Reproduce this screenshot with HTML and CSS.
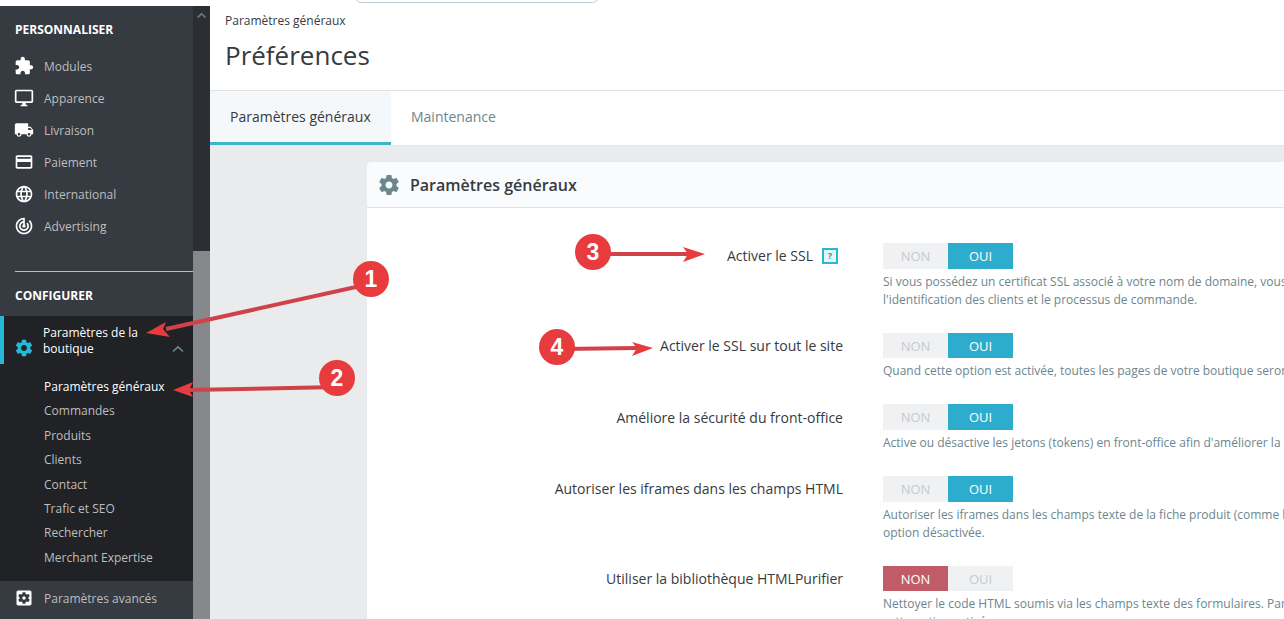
FILE: index.html
```html
<!DOCTYPE html>
<html lang="fr">
<head>
<meta charset="utf-8">
<title>Préférences</title>
<link rel="stylesheet" href="styles.css">
</head>
<body>
<div class="app">
  <aside class="sidebar">
    <nav class="nav">
      <h2 class="nav-title">PERSONNALISER</h2>
      <ul class="nav-list">
        <li class="nav-item"><svg class="nav-icon" viewBox="0 0 24 24"><path d="M20.5 11H19V7c0-1.1-.9-2-2-2h-4V3.5C13 2.12 11.88 1 10.5 1S8 2.12 8 3.5V5H4c-1.1 0-1.99.9-1.99 2v3.8H3.5c1.49 0 2.7 1.21 2.7 2.7s-1.21 2.7-2.7 2.7H2V20c0 1.1.9 2 2 2h3.8v-1.5c0-1.49 1.21-2.7 2.7-2.7 1.49 0 2.7 1.21 2.7 2.7V22H17c1.1 0 2-.9 2-2v-4h1.5c1.38 0 2.5-1.12 2.5-2.5S21.88 11 20.5 11z"/></svg><span>Modules</span></li>
        <li class="nav-item"><svg class="nav-icon" viewBox="0 0 24 24"><path d="M21 2H3c-1.1 0-2 .9-2 2v12c0 1.1.9 2 2 2h7v2H8v2h8v-2h-2v-2h7c1.1 0 2-.9 2-2V4c0-1.1-.9-2-2-2zm0 14H3V4h18v12z"/></svg><span>Apparence</span></li>
        <li class="nav-item"><svg class="nav-icon" viewBox="0 0 24 24"><path d="M20 8h-3V4H3c-1.1 0-2 .9-2 2v11h2c0 1.66 1.34 3 3 3s3-1.34 3-3h6c0 1.66 1.34 3 3 3s3-1.34 3-3h2v-5l-3-4zM6 18.5c-.83 0-1.5-.67-1.5-1.5s.67-1.5 1.5-1.5 1.5.67 1.5 1.5-.67 1.5-1.5 1.5zm13.5-9l1.96 2.5H17V9.5h2.5zm-1.5 9c-.83 0-1.5-.67-1.5-1.5s.67-1.5 1.5-1.5 1.5.67 1.5 1.5-.67 1.5-1.5 1.5z"/></svg><span>Livraison</span></li>
        <li class="nav-item"><svg class="nav-icon" viewBox="0 0 24 24"><path d="M20 4H4c-1.11 0-1.99.89-1.99 2L2 18c0 1.11.89 2 2 2h16c1.11 0 2-.89 2-2V6c0-1.11-.89-2-2-2zm0 14H4v-6h16v6zm0-10H4V6h16v2z"/></svg><span>Paiement</span></li>
        <li class="nav-item"><svg class="nav-icon" viewBox="0 0 24 24"><path d="M11.99 2C6.47 2 2 6.48 2 12s4.47 10 9.99 10C17.52 22 22 17.52 22 12S17.52 2 11.99 2zm6.93 6h-2.95c-.32-1.25-.78-2.45-1.38-3.56 1.84.63 3.37 1.91 4.33 3.56zM12 4.04c.83 1.2 1.48 2.53 1.91 3.96h-3.82c.43-1.43 1.08-2.76 1.91-3.96zM4.26 14C4.1 13.36 4 12.69 4 12s.1-1.36.26-2h3.38c-.08.66-.14 1.32-.14 2 0 .68.06 1.34.14 2H4.26zm.82 2h2.95c.32 1.25.78 2.45 1.38 3.56-1.84-.63-3.37-1.9-4.33-3.56zm2.95-8H5.08c.96-1.66 2.49-2.93 4.33-3.56C8.81 5.55 8.35 6.75 8.03 8zM12 19.96c-.83-1.2-1.48-2.53-1.91-3.96h3.82c-.43 1.43-1.08 2.76-1.91 3.96zM14.34 14H9.66c-.09-.66-.16-1.32-.16-2 0-.68.07-1.35.16-2h4.68c.09.65.16 1.32.16 2 0 .68-.07 1.34-.16 2zm.25 5.56c.6-1.11 1.06-2.31 1.38-3.56h2.95c-.96 1.65-2.49 2.93-4.33 3.56zM16.36 14c.08-.66.14-1.32.14-2 0-.68-.06-1.34-.14-2h3.38c.16.64.26 1.31.26 2s-.1 1.36-.26 2h-3.38z"/></svg><span>International</span></li>
        <li class="nav-item"><svg class="nav-icon" viewBox="0 0 24 24"><path d="M19.07 4.93l-1.41 1.41C19.1 7.79 20 9.79 20 12c0 4.42-3.58 8-8 8s-8-3.58-8-8c0-4.08 3.05-7.44 7-7.93v2.02C8.16 6.57 6 9.03 6 12c0 3.31 2.69 6 6 6s6-2.69 6-6c0-1.66-.67-3.16-1.76-4.24l-1.41 1.41C15.55 9.9 16 10.9 16 12c0 2.21-1.79 4-4 4s-4-1.79-4-4c0-1.86 1.28-3.41 3-3.86v2.14c-.6.35-1 .98-1 1.72 0 1.1.9 2 2 2s2-.9 2-2c0-.74-.4-1.38-1-1.72V2h-1C6.48 2 2 6.48 2 12s4.48 10 10 10 10-4.48 10-10c0-2.76-1.12-5.26-2.93-7.07z"/></svg><span>Advertising</span></li>
      </ul>
      <hr class="nav-divider">
      <h2 class="nav-title nav-title-config">CONFIGURER</h2>
      <div class="nav-active">
        <div class="nav-parent">
          <svg class="nav-icon nav-icon-blue" viewBox="0 0 24 24"><path d="M19.43 12.98c.04-.32.07-.64.07-.98s-.03-.66-.07-.98l2.11-1.65c.19-.15.24-.42.12-.64l-2-3.46c-.12-.22-.39-.3-.61-.22l-2.49 1c-.52-.4-1.08-.73-1.69-.98l-.38-2.65C14.46 2.18 14.25 2 14 2h-4c-.25 0-.46.18-.49.42l-.38 2.65c-.61.25-1.17.59-1.69.98l-2.49-1c-.23-.09-.49 0-.61.22l-2 3.46c-.13.22-.07.49.12.64l2.11 1.65c-.04.32-.07.65-.07.98s.03.66.07.98l-2.11 1.65c-.19.15-.24.42-.12.64l2 3.46c.12.22.39.3.61.22l2.49-1c.52.4 1.08.73 1.69.98l.38 2.65c.03.24.24.42.49.42h4c.25 0 .46-.18.49-.42l.38-2.65c.61-.25 1.17-.59 1.69-.98l2.49 1c.23.09.49 0 .61-.22l2-3.46c.12-.22.07-.49-.12-.64l-2.11-1.65zM12 15.5c-1.93 0-3.5-1.57-3.5-3.5s1.57-3.5 3.5-3.5 3.5 1.57 3.5 3.5-1.57 3.5-3.5 3.5z"/></svg>
          <span class="nav-parent-label">Paramètres de la boutique</span>
          <svg class="nav-chevron" viewBox="0 0 12 8"><path d="M1 6.5 6 1.8l5 4.7" fill="none" stroke="currentColor" stroke-width="1.6"/></svg>
        </div>
        <ul class="nav-sub">
          <li class="nav-sub-item nav-sub-current">Paramètres généraux</li>
          <li class="nav-sub-item">Commandes</li>
          <li class="nav-sub-item">Produits</li>
          <li class="nav-sub-item">Clients</li>
          <li class="nav-sub-item">Contact</li>
          <li class="nav-sub-item">Trafic et SEO</li>
          <li class="nav-sub-item">Rechercher</li>
          <li class="nav-sub-item">Merchant Expertise</li>
        </ul>
      </div>
      <div class="nav-item nav-item-last"><svg class="nav-icon" viewBox="0 0 24 24"><path d="M12 10c-1.1 0-2 .9-2 2s.9 2 2 2 2-.9 2-2-.9-2-2-2zm7-7H5c-1.11 0-2 .9-2 2v14c0 1.1.89 2 2 2h14c1.11 0 2-.9 2-2V5c0-1.1-.89-2-2-2zm-1.75 9c0 .23-.02.46-.05.68l1.48 1.16c.13.11.17.3.08.45l-1.4 2.42c-.09.15-.27.21-.43.15l-1.74-.7c-.36.28-.76.51-1.18.69l-.26 1.85c-.03.17-.18.3-.35.3h-2.8c-.17 0-.32-.13-.35-.29l-.26-1.85c-.43-.18-.82-.41-1.18-.69l-1.74.7c-.16.06-.34 0-.43-.15l-1.4-2.42c-.09-.15-.05-.34.08-.45l1.48-1.16c-.03-.23-.05-.46-.05-.69 0-.23.02-.46.05-.68l-1.48-1.16c-.13-.11-.17-.3-.08-.45l1.4-2.42c.09-.15.27-.21.43-.15l1.74.7c.36-.28.76-.51 1.18-.69l.26-1.85c.03-.17.18-.3.35-.3h2.8c.17 0 .32.13.35.29l.26 1.85c.43.18.82.41 1.18.69l1.74-.7c.16-.06.34 0 .43.15l1.4 2.42c.09.15.05.34-.08.45l-1.48 1.16c.03.23.05.46.05.69z"/></svg><span>Paramètres avancés</span></div>
    </nav>
    <div class="scrollbar">
      <div class="scroll-track"><svg class="scroll-up" viewBox="0 0 12 8"><path d="M1.5 6.5 6 2l4.5 4.5" fill="none" stroke="currentColor" stroke-width="2"/></svg></div>
      <div class="scroll-thumb"></div>
    </div>
  </aside>

  <main class="main">
    <header class="page-head">
      <div class="search-edge"></div>
      <div class="breadcrumb">Paramètres généraux</div>
      <h1 class="page-title">Préférences</h1>
    </header>
    <div class="tabs">
      <div class="tab tab-active">Paramètres généraux</div>
      <div class="tab">Maintenance</div>
    </div>
    <div class="content">
      <section class="card">
        <div class="card-head">
          <svg class="card-icon" viewBox="0 0 24 24"><path d="M19.43 12.98c.04-.32.07-.64.07-.98s-.03-.66-.07-.98l2.11-1.65c.19-.15.24-.42.12-.64l-2-3.46c-.12-.22-.39-.3-.61-.22l-2.49 1c-.52-.4-1.08-.73-1.69-.98l-.38-2.65C14.46 2.18 14.25 2 14 2h-4c-.25 0-.46.18-.49.42l-.38 2.65c-.61.25-1.17.59-1.69.98l-2.49-1c-.23-.09-.49 0-.61.22l-2 3.46c-.13.22-.07.49.12.64l2.11 1.65c-.04.32-.07.65-.07.98s.03.66.07.98l-2.11 1.65c-.19.15-.24.42-.12.64l2 3.46c.12.22.39.3.61.22l2.49-1c.52.4 1.08.73 1.69.98l.38 2.65c.03.24.24.42.49.42h4c.25 0 .46-.18.49-.42l.38-2.65c.61-.25 1.17-.59 1.69-.98l2.49 1c.23.09.49 0 .61-.22l2-3.46c.12-.22.07-.49-.12-.64l-2.11-1.65zM12 15.5c-1.93 0-3.5-1.57-3.5-3.5s1.57-3.5 3.5-3.5 3.5 1.57 3.5 3.5-1.57 3.5-3.5 3.5z"/></svg>
          <h2 class="card-title">Paramètres généraux</h2>
        </div>
        <div class="form">
          <div class="row">
            <div class="row-label"><span>Activer le SSL</span><span class="help-badge">?</span></div>
            <div class="row-field">
              <div class="switch"><span class="opt">NON</span><span class="opt opt-yes">OUI</span></div>
              <p class="hint">Si vous possédez un certificat SSL associé à votre nom de domaine, vous pouvez activer le chiffrement SSL (https://) pour<br>l'identification des clients et le processus de commande.</p>
            </div>
          </div>
          <div class="row">
            <div class="row-label"><span>Activer le SSL sur tout le site</span></div>
            <div class="row-field">
              <div class="switch"><span class="opt">NON</span><span class="opt opt-yes">OUI</span></div>
              <p class="hint">Quand cette option est activée, toutes les pages de votre boutique seront sécurisées par SSL.</p>
            </div>
          </div>
          <div class="row">
            <div class="row-label"><span>Améliore la sécurité du front-office</span></div>
            <div class="row-field">
              <div class="switch"><span class="opt">NON</span><span class="opt opt-yes">OUI</span></div>
              <p class="hint">Active ou désactive les jetons (tokens) en front-office afin d'améliorer la sécurité de PrestaShop.</p>
            </div>
          </div>
          <div class="row">
            <div class="row-label"><span>Autoriser les iframes dans les champs HTML</span></div>
            <div class="row-field">
              <div class="switch"><span class="opt">NON</span><span class="opt opt-yes">OUI</span></div>
              <p class="hint">Autoriser les iframes dans les champs texte de la fiche produit (comme la description). Nous recommandons de laisser cette<br>option désactivée.</p>
            </div>
          </div>
          <div class="row">
            <div class="row-label"><span>Utiliser la bibliothèque HTMLPurifier</span></div>
            <div class="row-field">
              <div class="switch"><span class="opt opt-no">NON</span><span class="opt">OUI</span></div>
              <p class="hint">Nettoyer le code HTML soumis via les champs texte des formulaires. Par mesure de sécurité, nous recommandons de laisser<br>cette option activée.</p>
            </div>
          </div>
        </div>
      </section>
    </div>
  </main>
</div>

<svg class="notes" viewBox="0 0 1284 619" aria-hidden="true">
  <g class="note-line">
    <path d="M365 285 166 329"/>
    <path d="M338 387 188 390"/>
    <path d="M596 254 690 254"/>
    <path d="M560 349 638 348"/>
  </g>
  <g class="note-head">
    <path d="M146 333 166 322 163 329 170 337z"/>
    <path d="M173 390 193 382 189 390 193 397z"/>
    <path d="M705 254 683 247 688 254 683 262z"/>
    <path d="M653 348 632 342 637 348 632 356z"/>
  </g>
  <g class="note-dot">
    <circle cx="371" cy="279" r="18"/>
    <circle cx="337" cy="378" r="18"/>
    <circle cx="593" cy="252" r="18"/>
    <circle cx="557" cy="347" r="18"/>
  </g>
  <g class="note-num">
    <text x="371" y="287">1</text>
    <text x="337" y="386">2</text>
    <text x="593" y="260">3</text>
    <text x="557" y="355">4</text>
  </g>
</svg>
</body>
</html>
```
FILE: styles.css
```css
* { box-sizing: border-box; }
html, body { margin: 0; height: 100%; overflow: hidden; }
body { background: #fff; font-family: "Open Sans", "Liberation Sans", sans-serif; color: #363a41; }
h1, h2, p, ul { margin: 0; padding: 0; }
ul { list-style: none; }

.app { display: flex; height: 619px; }

/* Sidebar */
.sidebar { display: flex; flex: 0 0 210px; margin-top: 6px; height: 613px; }
.nav { flex: 0 0 193px; background: #363a41; color: #bebebe; font-size: 12px; overflow: hidden; }
.nav-title { font-size: 12px; font-weight: 700; color: #fff; line-height: 16px; padding: 16px 0 0 15px; }
.nav-list { margin-top: 12px; }
.nav-item { display: flex; align-items: center; height: 32px; padding-left: 14px; gap: 10px; }
.nav-icon { flex: 0 0 20px; width: 20px; height: 20px; fill: #fff; }
.nav-divider { margin: 29px 0 0 15px; border: 0; border-top: 1px solid #bebebe; }
.nav-title-config { padding-top: 16px; }
.nav-active { margin-top: 12px; background: #202226; height: 265px; }
.nav-parent { position: relative; display: flex; align-items: center; height: 48px; gap: 9px; color: #fff; border-left: 4px solid #25b9d7; padding-left: 10px; }
.nav-parent-label { width: 110px; line-height: 16px; padding-top: 1px; }
.nav-icon-blue { fill: #25b9d7; margin-top: 16px; }
.nav-chevron { position: absolute; right: 9px; top: 29px; width: 12px; height: 8px; color: #6c868e; }
.nav-sub { padding-top: 11px; }
.nav-sub-item { height: 24.4px; line-height: 24.4px; padding-left: 44px; }
.nav-sub-current { color: #fff; }
.nav-item-last { height: 34px; }
.scrollbar { flex: 0 0 17px; display: flex; flex-direction: column; }
.scroll-track { height: 245px; background: #2b2e33; position: relative; }
.scroll-up { position: absolute; left: 3px; top: 6px; width: 11px; height: 7px; color: #6f7277; }
.scroll-thumb { flex: 1; background: #87888b; }

/* Main */
.main { flex: 1; min-width: 0; display: flex; flex-direction: column; height: 619px; }
.page-head { position: relative; height: 91px; padding: 13px 0 0 15px; border-bottom: 1px solid #dfe3e4; }
.search-edge { position: absolute; left: 145px; top: -10px; width: 244px; height: 13px; border: 1px solid #bbcdd2; border-radius: 10px; }
.breadcrumb { font-size: 12px; line-height: 15px; color: #363a41; }
.page-title { font-size: 26px; font-weight: 400; line-height: 34px; margin-top: 10px; }
.tabs { display: flex; height: 55px; background: #fff; border-bottom: 1px solid #e4e6e8; flex: 0 0 55px; }
.tab { padding: 0 20px; height: 54px; line-height: 52px; font-size: 14px; color: #6c868e; }
.tab-active { color: #363a41; background: #f4f8fa; border-bottom: 3px solid #3eb3c9; width: 181px; }
.content { flex: 1; background: #eaebec; padding: 16px 0 0 157px; overflow: hidden; }
.card { width: 1100px; height: 500px; background: #fff; border-radius: 5px 0 0 0; }
.card-head { display: flex; align-items: center; gap: 9px; height: 46px; padding-left: 10px; background: #fafbfc; border-bottom: 1px solid #d3e8ec; border-radius: 5px 0 0 0; }
.card-icon { width: 24px; height: 24px; fill: #6c868e; flex: none; }
.card-title { font-size: 16px; font-weight: 600; color: #363a41; }
.form { padding-top: 35px; }
.row { display: flex; gap: 40px; margin-bottom: 24px; }
.row-label { flex: 0 0 476px; height: 25.7px; display: flex; align-items: center; justify-content: flex-end; font-size: 14px; color: #363a41; }
.help-badge { width: 16px; height: 16px; margin-left: 9px; margin-right: 5px; border: 2px solid #25b9d7; background: #e6f7fa; color: #3a8a96; font-size: 9px; font-weight: 700; line-height: 12px; text-align: center; }
.row-field { flex: 1; }
.switch { display: flex; width: 130px; height: 25.7px; background: #eff1f2; margin-bottom: 4px; }
.opt { flex: 1; text-align: center; line-height: 27px; font-size: 13px; color: #c5cbce; }
.opt-yes { background: #2eacce; color: #fff; }
.opt-no { background: #c05c67; color: #fff; }
.hint { font-size: 12px; line-height: 18px; color: #6c868e; white-space: nowrap; }

/* Annotation overlay */
.notes { position: absolute; left: 0; top: 0; width: 1284px; height: 619px; pointer-events: none; }
.note-line path { fill: none; stroke: #d0424a; stroke-width: 4; }
.note-head path { fill: #e83b3e; }
.note-dot circle { fill: #e83b3e; }
.note-num text { fill: #fff; font-family: "Liberation Sans", sans-serif; font-size: 23px; font-weight: 700; text-anchor: middle; }
```
